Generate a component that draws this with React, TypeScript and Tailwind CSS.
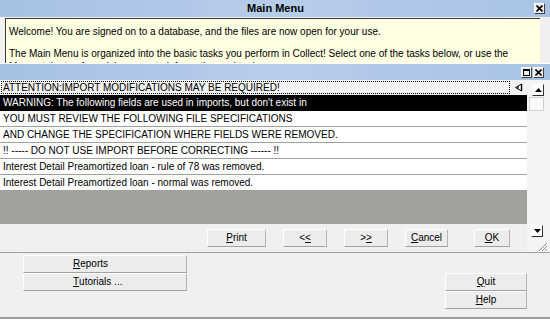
import type { ReactNode } from "react";

const rows = [
  "YOU MUST REVIEW THE FOLLOWING FILE SPECIFICATIONS",
  "AND CHANGE THE SPECIFICATION WHERE FIELDS WERE REMOVED.",
  "!! ----- DO NOT USE IMPORT BEFORE CORRECTING ------ !!",
  "Interest Detail Preamortized loan - rule of 78 was removed.",
  "Interest Detail Preamortized loan - normal was removed.",
];

function Btn({ children, className = "" }: { children: ReactNode; className?: string }) {
  return (
    <button
      className={`flex h-[18px] items-center justify-center border border-t-white border-l-white border-b-[#a0a0a0] border-r-[#b4b4b4] bg-[#ececec] text-[10px] leading-none text-black ${className}`}
    >
      {children}
    </button>
  );
}

function BoxX() {
  return (
    <div className="flex h-[11px] w-[11px] items-center justify-center border border-t-white border-l-white border-b-[#404040] border-r-[#404040] bg-[#ececec]">
      <svg width="7" height="7" viewBox="0 0 7 7">
        <path d="M0.5 0.5 L6.5 6.5 M6.5 0.5 L0.5 6.5" stroke="#000" strokeWidth="1.6" />
      </svg>
    </div>
  );
}

function BoxRestore() {
  return (
    <div className="flex h-[11px] w-[11px] items-center justify-center border border-t-white border-l-white border-b-[#404040] border-r-[#404040] bg-[#ececec]">
      <div className="h-[7px] w-[7px] border border-t-2 border-black" />
    </div>
  );
}

export default function App() {
  return (
    <div className="flex h-[320px] w-[550px] flex-col overflow-hidden bg-[#f0f0f0] font-['Liberation_Sans',Arial,sans-serif] text-black">
      {/* main window title */}
      <div className="flex h-[17px] items-center bg-gradient-to-r from-[#a7c1e3] via-[#b6cdea] to-[#a9c3e4]">
        <div className="w-[17px]" />
        <div className="flex-1 text-center text-[11px] font-bold">Main Menu</div>
        <div className="pr-[5px]">
          <BoxX />
        </div>
      </div>

      {/* welcome note */}
      <div className="h-[46px] pl-[5px] pr-[10px] pt-[1px]">
        <div className="h-full overflow-hidden border-l border-t border-[#3a3a3a] bg-[#ffffe1] pl-[3px] pr-[24px] pt-[6px] text-[10px] leading-[13px]">
          <p>Welcome! You are signed on to a database, and the files are now open for your use.</p>
          <p className="mt-[9px]">
            The Main Menu is organized into the basic tasks you perform in Collect! Select one of the tasks below, or use the
            Menu at the top for quick access to information and tools.
          </p>
        </div>
      </div>

      {/* import warnings dialog */}
      <div className="border-t border-white">
        <div className="flex h-[16px] items-center justify-end gap-[1px] bg-gradient-to-r from-[#a7c1e3] via-[#b6cdea] to-[#a9c3e4] pr-[6px]">
          <BoxRestore />
          <BoxX />
        </div>
        <div className="flex h-[172px]">
          <div className="flex w-[527px] flex-col">
            <div className="flex h-[15px] items-center bg-[#f3f3f3] pl-[1px]">
              <div className="flex h-[13px] w-[509px] items-center border border-dotted border-black pl-[1px] text-[10px]">
                ATTENTION:IMPORT MODIFICATIONS MAY BE REQUIRED!
              </div>
              <svg className="ml-[4px]" width="9" height="9" viewBox="0 0 9 9">
                <path d="M7.5 1 L1.5 4.5 L7.5 8 Z" fill="#fff" stroke="#000" strokeWidth="1" />
                <path d="M7.5 1 L7.5 8 M4 3.5 L4 5.5" stroke="#000" strokeWidth="1.4" />
              </svg>
            </div>
            <div className="h-[16px] bg-black pl-[3px] text-[10px] leading-[16px] text-white">
              WARNING: The following fields are used in imports, but don't exist in
            </div>
            {rows.map((r) => (
              <div key={r} className="h-[16px] border-b border-[#a0a0a0] bg-white pl-[3px] text-[10px] leading-[15px]">
                {r}
              </div>
            ))}
            <div className="h-[33px] bg-[#a2a29f]" />
            <div className="flex flex-1 items-start justify-end pr-[17px] pt-[5px]">
              <Btn className="w-[59px]">
                <span className="underline">P</span>rint
              </Btn>
              <Btn className="ml-[17px] w-[44px]">
                &lt;<span className="underline">&lt;</span>
              </Btn>
              <Btn className="ml-[17px] w-[44px]">
                &gt;<span className="underline">&gt;</span>
              </Btn>
              <Btn className="ml-[17px] w-[43px]">
                <span className="underline">C</span>ancel
              </Btn>
              <Btn className="ml-[26px] w-[36px]">
                <span className="underline">O</span>K
              </Btn>
            </div>
          </div>

          {/* scrollbar */}
          <div className="flex w-[23px] flex-col bg-[#f4f4f4]">
            <div className="ml-[5px] mt-[4px] flex h-[12px] w-[12px] items-center justify-center border border-t-white border-l-white border-b-[#303030] border-r-[#303030] bg-white">
              <svg width="7" height="4" viewBox="0 0 7 4">
                <path d="M0 4 L3.5 0 L7 4 Z" fill="#000" />
              </svg>
            </div>
            <div className="ml-[2px] mt-[1px] h-[14px] w-[15px] border border-[#d0d0d0] bg-[#fafafa]" />
            <div className="flex-1" />
            <div className="ml-[4px] flex h-[12px] w-[12px] items-center justify-center border border-t-white border-l-white border-b-[#303030] border-r-[#303030] bg-white">
              <svg width="7" height="4" viewBox="0 0 7 4">
                <path d="M0 0 L3.5 4 L7 0 Z" fill="#000" />
              </svg>
            </div>
            <div className="flex h-[15px] items-end justify-end pr-[2px]">
              <svg width="11" height="11" viewBox="0 0 11 11">
                <path d="M10 2 L2 10 M10 5 L5 10 M10 8 L8 10" stroke="#8a8a8a" strokeWidth="1" />
                <path d="M11 3 L3 11 M11 6 L6 11 M11 9 L9 11" stroke="#ffffff" strokeWidth="1" />
              </svg>
            </div>
          </div>
        </div>
      </div>

      {/* main window bottom panel */}
      <div className="flex flex-1 justify-between border-b-2 border-t border-b-[#9c9c9c] border-t-[#a0a0a0] px-[23px]">
        <div className="mt-[2px] flex flex-col">
          <Btn className="h-[17px] w-[164px] justify-start pl-[49px]">
            <span className="underline">R</span>eports
          </Btn>
          <Btn className="h-[16px] w-[164px] justify-start pl-[49px]">
            <span className="underline">T</span>utorials ...
          </Btn>
        </div>
        <div className="mt-[20px] flex flex-col">
          <Btn className="h-[16px] w-[82px]">
            <span className="underline">Q</span>uit
          </Btn>
          <Btn className="h-[17px] w-[82px]">
            <span className="underline">H</span>elp
          </Btn>
        </div>
      </div>
      <div className="h-[1px] bg-white" />
    </div>
  );
}
